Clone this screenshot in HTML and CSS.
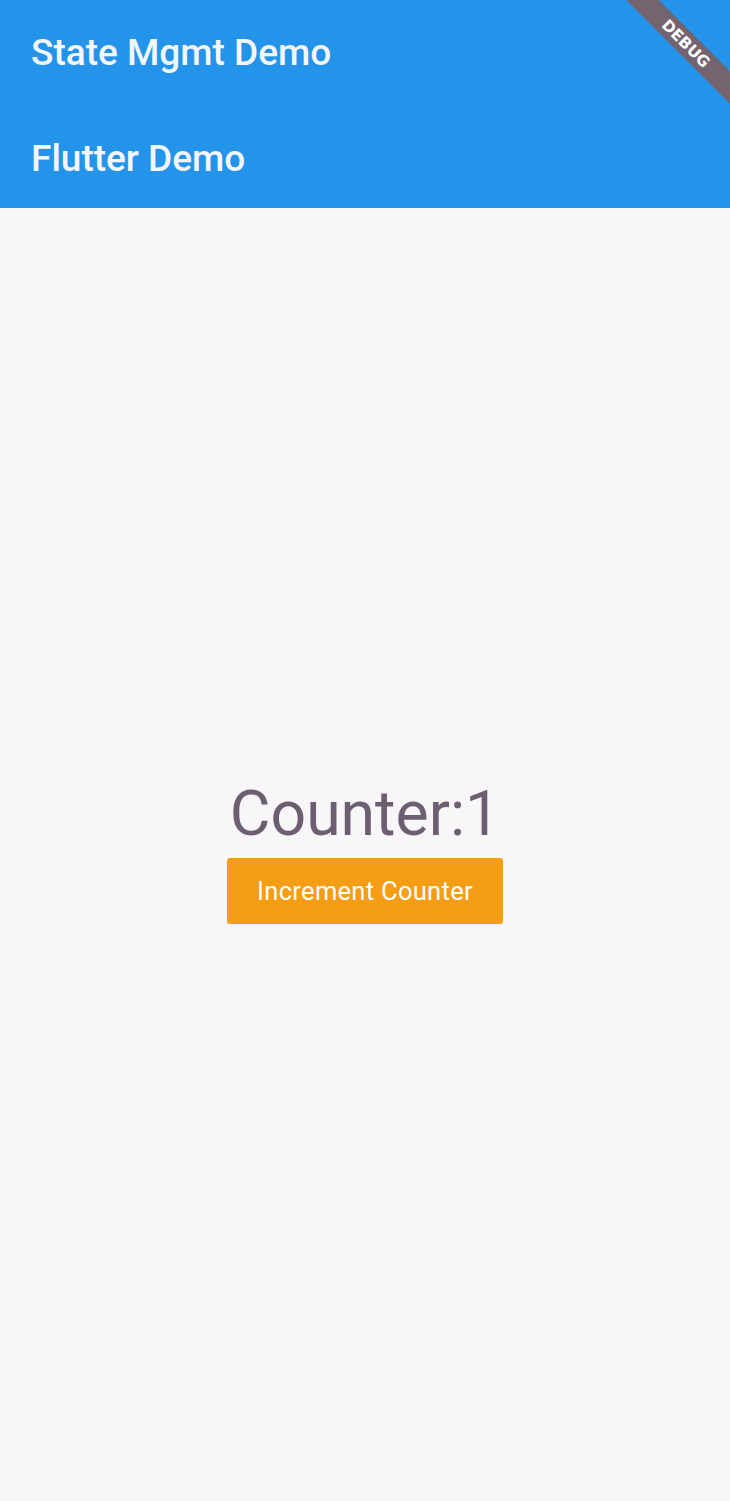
FILE: index.html
```html
<!DOCTYPE html>
<html>
<head>
<meta charset="utf-8">
<link rel="stylesheet" href="styles.css">
</head>
<body>
<div class="app">
  <header class="appbar">
    <div class="bar-row"><span class="bar-title">State Mgmt Demo</span></div>
    <div class="bar-row second"><span class="bar-title">Flutter Demo</span></div>
    <div class="debug-banner"><span>DEBUG</span></div>
  </header>
  <main class="content">
    <div class="counter">Counter:1</div>
    <button class="inc-btn">Increment Counter</button>
  </main>
</div>
</body>
</html>
```
FILE: styles.css
```css
* { box-sizing: border-box; }
html, body { margin: 0; padding: 0; }
body {
  width: 730px;
  height: 1501px;
  background: #f9f6f9;
  font-family: Roboto, "Noto Sans", sans-serif;
  overflow: hidden;
}
.app {
  display: flex;
  flex-direction: column;
  height: 1501px;
}
.appbar {
  position: relative;
  overflow: hidden;
  background: #2394ea;
  height: 208px;
  display: flex;
  flex-direction: column;
}
.bar-row {
  height: 104px;
  display: flex;
  align-items: center;
  padding-left: 31px;
}
.bar-row.second {
  padding-top: 4px;
}
.bar-title {
  color: #f4f6fa;
  font-size: 37px;
  font-weight: 500;
}
.debug-banner {
  position: absolute;
  left: 586px;
  top: 32px;
  width: 200px;
  height: 23px;
  background: #736470;
  transform: rotate(45deg);
  display: flex;
  align-items: center;
  justify-content: center;
}
.debug-banner span {
  color: #fff;
  font-family: "DejaVu Sans", sans-serif;
  font-weight: bold;
  font-size: 15.5px;
}
.content {
  flex: 1;
  display: flex;
  flex-direction: column;
  align-items: center;
  justify-content: center;
  padding-bottom: 9px;
}
.counter {
  color: #6c5f71;
  font-size: 62.5px;
  line-height: 73px;
}
.inc-btn {
  margin-top: 8px;
  width: 276px;
  height: 66px;
  border: none;
  border-radius: 3px;
  background: #f69d16;
  color: #fff;
  font-family: Roboto, "Noto Sans", sans-serif;
  font-size: 25.5px;
  font-weight: 400;
  letter-spacing: 0.3px;
}
```
